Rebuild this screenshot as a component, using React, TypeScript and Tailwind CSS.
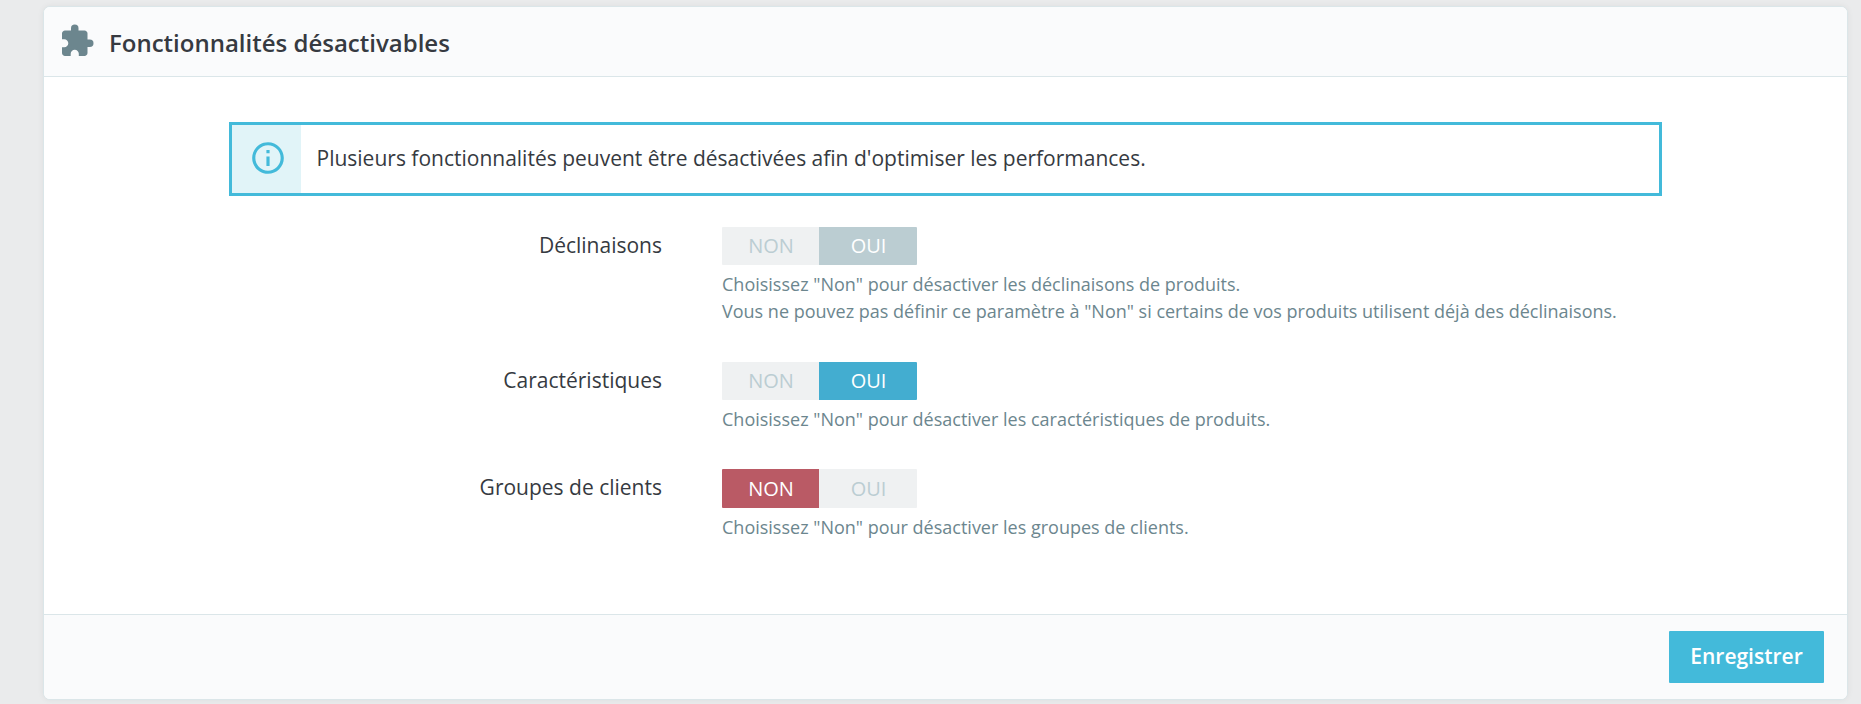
import React, { useState } from 'react';
import { MdExtension, MdInfoOutline } from 'react-icons/md';

interface Feature {
  id: string;
  label: string;
  help: string[];
  enabled: boolean;
  disabled?: boolean;
}

const FEATURES: Feature[] = [
  {
    id: 'combinations',
    label: 'Déclinaisons',
    help: [
      'Choisissez "Non" pour désactiver les déclinaisons de produits.',
      'Vous ne pouvez pas définir ce paramètre à "Non" si certains de vos produits utilisent déjà des déclinaisons.',
    ],
    enabled: true,
    disabled: true,
  },
  {
    id: 'features',
    label: 'Caractéristiques',
    help: ['Choisissez "Non" pour désactiver les caractéristiques de produits.'],
    enabled: true,
  },
  {
    id: 'groups',
    label: 'Groupes de clients',
    help: ['Choisissez "Non" pour désactiver les groupes de clients.'],
    enabled: false,
  },
];

interface SwitchProps {
  value: boolean;
  disabled?: boolean;
  onChange: (value: boolean) => void;
}

function Switch({ value, disabled, onChange }: SwitchProps) {
  const idle = 'bg-[#eff1f2] text-[#bbcdd2]';
  const on = disabled ? 'bg-[#bbcdd2] text-white' : 'bg-[#43add0] text-white';
  const off = disabled ? 'bg-[#bbcdd2] text-white' : 'bg-[#ba5a65] text-white';

  return (
    <div className="flex h-[38.4px] w-[195px] overflow-hidden rounded-[1px] text-[20px] leading-[38px]">
      <button
        type="button"
        disabled={disabled}
        onClick={() => onChange(false)}
        className={`w-[97px] pl-px ${value ? idle : off}`}
      >
        NON
      </button>
      <button
        type="button"
        disabled={disabled}
        onClick={() => onChange(true)}
        className={`w-[98px] pl-px ${value ? on : idle}`}
      >
        OUI
      </button>
    </div>
  );
}

export default function App() {
  const [values, setValues] = useState<Record<string, boolean>>(
    Object.fromEntries(FEATURES.map((f) => [f.id, f.enabled]))
  );

  return (
    <div className="h-[704px] overflow-hidden bg-[#eaebec] pt-1.5 pr-[13px] pl-[43px] font-['Open_Sans',sans-serif] text-[#363a41]">
      <div className="flex h-[694px] flex-col overflow-hidden rounded-[7px] border border-[#dbe6e9] bg-white shadow-[0_0_6px_rgba(0,0,0,0.06)]">
        <div className="flex h-[70px] shrink-0 items-center border-b border-[#dbe6e9] bg-[#fafbfc] pt-0.5 pl-[15px]">
          <MdExtension className="mb-[3px] size-9 text-[#6c868e]" />
          <h3 className="ml-[14px] text-[24px] leading-9 font-semibold">Fonctionnalités désactivables</h3>
        </div>

        <div className="flex-1 px-[185px] pt-[45px]">
          <div className="flex h-[74px] border-[3px] border-[#43bada]">
            <div className="flex w-[69px] items-center justify-center bg-[#e1f4f8] pb-0.5 pl-[2px] text-[#43bada]">
              <MdInfoOutline className="size-[38px]" />
            </div>
            <p className="pl-[15.5px] text-[21px] leading-[66px]">
              Plusieurs fonctionnalités peuvent être désactivées afin d'optimiser les performances.
            </p>
          </div>

          <div className="mt-[31px] flex flex-col gap-[36.3px]">
            {FEATURES.map((feature) => (
              <div key={feature.id} className="flex">
                <span className="w-[433px] shrink-0 pt-[3px] text-right text-[21px] leading-[31px]">
                  {feature.label}
                </span>
                <div className="ml-[60px]">
                  <Switch
                    value={values[feature.id]}
                    disabled={feature.disabled}
                    onChange={(value) => setValues({ ...values, [feature.id]: value })}
                  />
                  <div className="mt-1.5 text-[18px] leading-[27px] whitespace-nowrap text-[#6c868e]">
                    {feature.help.map((line) => (
                      <p key={line}>{line}</p>
                    ))}
                  </div>
                </div>
              </div>
            ))}
          </div>
        </div>

        <div className="flex h-[85px] shrink-0 justify-end border-t border-[#dbe6e9] bg-[#fafbfc] pt-4 pr-[23px]">
          <button
            type="button"
            className="h-[52px] w-[155px] rounded-[1px] bg-[#43bada] pb-0.5 text-[21px] leading-[50px] font-semibold text-white"
          >
            Enregistrer
          </button>
        </div>
      </div>
    </div>
  );
}
